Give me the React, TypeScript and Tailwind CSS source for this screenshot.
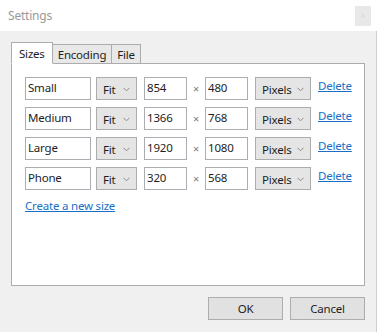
import React from "react";

const sizes = [
  { name: "Small", w: "854", h: "480" },
  { name: "Medium", w: "1366", h: "768" },
  { name: "Large", w: "1920", h: "1080" },
  { name: "Phone", w: "320", h: "568" },
];

const Chevron = () => (
  <svg width="7" height="5" viewBox="0 0 7 5" className="shrink-0">
    <polyline points="0.5,0.8 3.5,3.8 6.5,0.8" fill="none" stroke="#8a8a8a" strokeWidth="1" />
  </svg>
);

const Select = ({ value, width }: { value: string; width: string }) => (
  <div
    className={`${width} h-[23px] shrink-0 flex items-center justify-between pl-[6px] pr-[6px] pt-[3px] bg-[#e5e5e5] border border-[#acacac] text-[#1e1e1e]`}
  >
    <span>{value}</span>
    <span className="pb-[2px]">
      <Chevron />
    </span>
  </div>
);

const Field = ({ value, width }: { value: string; width: string }) => (
  <div
    className={`${width} h-[23px] shrink-0 pl-[2px] pt-[1px] bg-white border border-[#abadb3] text-[#1e1e1e] leading-[18px]`}
  >
    {value}
  </div>
);

export default function App() {
  return (
    <div
      className="w-[377px] h-[332px] bg-[#f0f0f0] flex flex-col text-[11.5px] tracking-[-0.2px] overflow-hidden"
      style={{ fontFamily: '"Segoe UI", "Noto Sans", sans-serif' }}
    >
      {/* Title bar */}
      <div className="h-[31px] bg-white flex items-center justify-between pl-[8px] pr-[6px] shrink-0">
        <span className="text-[#9a9a9a] text-[12px]">Settings</span>
        <div className="w-[16px] h-[20px] bg-[#e8e8e8] flex items-center justify-center text-[8px] text-[#d8d8d8]">
          ×
        </div>
      </div>

      {/* Body */}
      <div className="flex-1 flex flex-col px-[11px] pt-[12px] border-r border-[#cfcfcf]">
        {/* Tabs */}
        <div className="flex items-end h-[21px] relative z-10 -mb-px">
          <div className="h-[22px] px-[7px] pt-[2px] bg-white border border-[#acacac] border-b-white text-[#1e1e1e]">
            Sizes
          </div>
          <div className="h-[20px] px-[5px] pt-[1px] bg-[#e8e8e8] border border-l-0 border-[#acacac] text-[#1e1e1e] leading-[18px]">
            Encoding
          </div>
          <div className="h-[20px] px-[5px] pt-[1px] bg-[#e8e8e8] border border-l-0 border-[#acacac] text-[#1e1e1e] leading-[18px]">
            File
          </div>
        </div>

        {/* Panel */}
        <div className="h-[223px] bg-white border border-[#acacac] pt-[13px] pl-[13px] flex flex-col">
          <div className="flex flex-col gap-[7px]">
            {sizes.map((s) => (
              <div key={s.name} className="flex items-start">
                <Field value={s.name} width="w-[66px]" />
                <div className="w-[5px]" />
                <Select value="Fit" width="w-[41px]" />
                <div className="w-[7px]" />
                <Field value={s.w} width="w-[43px]" />
                <div className="w-[18px] h-[23px] flex items-center justify-center text-[#7a7a7a] text-[11px] pt-[2px]">
                  ×
                </div>
                <Field value={s.h} width="w-[43px]" />
                <div className="w-[7px]" />
                <Select value="Pixels" width="w-[56px]" />
                <a className="ml-[7px] text-[#1a6fc4] underline leading-[18px]">Delete</a>
              </div>
            ))}
          </div>
          <a className="mt-[7px] text-[#1a6fc4] underline leading-[18px] self-start">Create a new size</a>
        </div>

        {/* Buttons */}
        <div className="flex justify-end gap-[7px] mt-[11px]">
          <div className="w-[75px] h-[23px] bg-[#e1e1e1] border border-[#adadad] flex items-center justify-center text-[#1e1e1e]">
            OK
          </div>
          <div className="w-[75px] h-[23px] bg-[#e1e1e1] border border-[#adadad] flex items-center justify-center text-[#1e1e1e]">
            Cancel
          </div>
        </div>
      </div>
    </div>
  );
}
